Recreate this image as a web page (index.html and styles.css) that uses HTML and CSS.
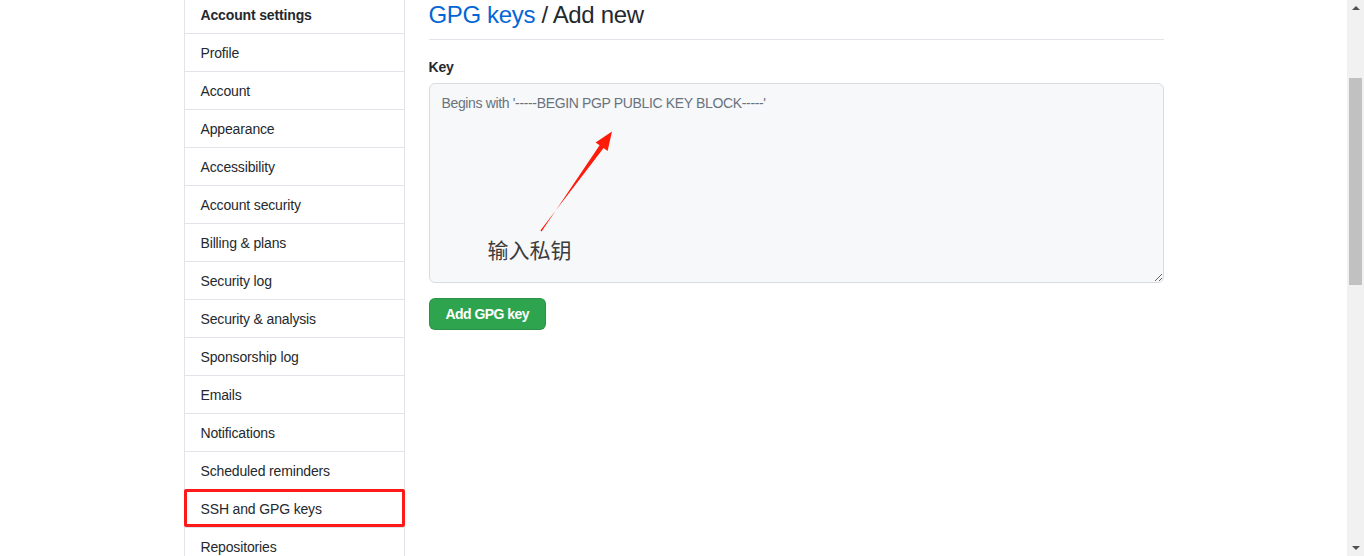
FILE: index.html
```html
<!DOCTYPE html>
<html lang="en">
<head>
<meta charset="utf-8">
<title>GPG keys / Add new</title>
<link rel="stylesheet" href="styles.css">
</head>
<body>
<div class="page">
  <div class="container">
    <nav class="sidebar">
      <div class="menu-heading">Account settings</div>
      <a class="menu-item" href="#">Profile</a>
      <a class="menu-item" href="#">Account</a>
      <a class="menu-item" href="#">Appearance</a>
      <a class="menu-item" href="#">Accessibility</a>
      <a class="menu-item" href="#">Account security</a>
      <a class="menu-item" href="#">Billing &amp; plans</a>
      <a class="menu-item" href="#">Security log</a>
      <a class="menu-item" href="#">Security &amp; analysis</a>
      <a class="menu-item" href="#">Sponsorship log</a>
      <a class="menu-item" href="#">Emails</a>
      <a class="menu-item" href="#">Notifications</a>
      <a class="menu-item" href="#">Scheduled reminders</a>
      <a class="menu-item selected" href="#">SSH and GPG keys</a>
      <a class="menu-item" href="#">Repositories</a>
    </nav>
    <main class="main">
      <div class="subhead">
        <h2 class="subhead-title"><a class="link" href="#">GPG keys</a> / Add new</h2>
      </div>
      <form class="form">
        <label class="label" for="key">Key</label>
        <div class="field">
          <textarea id="key" class="textarea" placeholder="Begins with '-----BEGIN PGP PUBLIC KEY BLOCK-----'"></textarea>
          <svg class="arrow" viewBox="429 83 735 200" width="735" height="200" aria-hidden="true">
            <polygon fill="#ff1a0a" points="540.4,230.5 603.6,148.1 607.6,151.0 612,131.5 595.6,142.4 599.6,145.3 541.6,231.5"/>
          </svg>
          <span class="note">输入私钥</span>
        </div>
        <button type="button" class="btn">Add GPG key</button>
      </form>
    </main>
  </div>
</div>
<div class="scrollbar">
  <span class="sb-up"></span>
  <div class="sb-track"><div class="sb-thumb"></div></div>
  <span class="sb-down"></span>
</div>
</body>
</html>
```

FILE: styles.css
```css
html, body {
  margin: 0;
  padding: 0;
  height: 556px;
  overflow: hidden;
  background: #fff;
}
body {
  display: flex;
  font-family: "Liberation Sans", Arial, sans-serif;
  font-size: 14px;
  line-height: 1.5;
  letter-spacing: -0.15px;
  color: #24292e;
}
.page {
  flex: 1;
  min-width: 0;
  overflow: hidden;
}
.container {
  width: 980px;
  margin: -4px auto 0;
  display: flex;
  gap: 24px;
  align-items: flex-start;
}
.sidebar {
  width: 221px;
  box-sizing: border-box;
  flex: none;
  border-left: 1px solid #e1e4e8;
  border-right: 1px solid #e1e4e8;
  display: flex;
  flex-direction: column;
}
.menu-heading,
.menu-item {
  display: block;
  padding: 9px 16px 7px;
  border-bottom: 1px solid #e1e4e8;
  line-height: 21px;
  color: #24292e;
  text-decoration: none;
}
.menu-heading {
  font-weight: bold;
}
.menu-item.selected {
  position: relative;
}
.menu-item.selected::after {
  content: "";
  position: absolute;
  top: -1px;
  bottom: 0;
  left: -1px;
  right: -1px;
  border: 3px solid #ff1a1a;
  border-radius: 2px;
}
.main {
  flex: 1;
  min-width: 0;
  padding-top: 3px;
}
.subhead {
  border-bottom: 1px solid #e1e4e8;
  padding-bottom: 8px;
  margin-bottom: 17px;
}
.subhead-title {
  margin: 0;
  font-size: 24px;
  font-weight: normal;
  line-height: 32px;
  letter-spacing: -0.35px;
}
.link {
  color: #0366d6;
  text-decoration: none;
}
.form {
  display: flex;
  flex-direction: column;
  align-items: flex-start;
}
.label {
  font-weight: bold;
  line-height: 21px;
  margin-bottom: 5px;
}
.field {
  position: relative;
  width: 100%;
  height: 200px;
  margin-bottom: 15px;
}
.textarea {
  display: block;
  box-sizing: border-box;
  width: 100%;
  height: 200px;
  margin: 0;
  padding: 9px 12px;
  font-family: inherit;
  font-size: 14px;
  line-height: 20px;
  letter-spacing: -0.35px;
  color: #24292e;
  background: #f6f8fa;
  border: 1px solid #d8dce1;
  border-radius: 6px;
  outline: none;
  resize: vertical;
}
.textarea::placeholder {
  color: #6a737d;
}
.arrow {
  position: absolute;
  left: 0;
  top: 0;
  pointer-events: none;
}
.note {
  position: absolute;
  left: 59px;
  top: 154px;
  font-family: "Noto Sans CJK SC", sans-serif;
  font-size: 21px;
  line-height: 24px;
  letter-spacing: 0;
  color: #3c3c3c;
}
.btn {
  box-sizing: border-box;
  height: 32px;
  padding: 5px 16px;
  font-family: inherit;
  font-size: 14px;
  font-weight: bold;
  line-height: 20px;
  letter-spacing: -0.55px;
  color: #fff;
  background: #2ea44f;
  border: 1px solid rgba(27, 31, 35, 0.15);
  border-radius: 6px;
}
.scrollbar {
  width: 17px;
  flex: none;
  background: #f1f1f1;
  display: flex;
  flex-direction: column;
  align-items: center;
}
.sb-up,
.sb-down {
  display: block;
  width: 0;
  height: 0;
  border-left: 4px solid transparent;
  border-right: 4px solid transparent;
}
.sb-up {
  margin-top: 6px;
  border-bottom: 4px solid #505050;
}
.sb-down {
  margin-bottom: 6px;
  border-top: 4px solid #505050;
}
.sb-track {
  flex: 1;
  width: 100%;
  padding-top: 68px;
}
.sb-thumb {
  width: 13px;
  height: 207px;
  margin: 0 auto;
  background: #c1c1c1;
}
```
